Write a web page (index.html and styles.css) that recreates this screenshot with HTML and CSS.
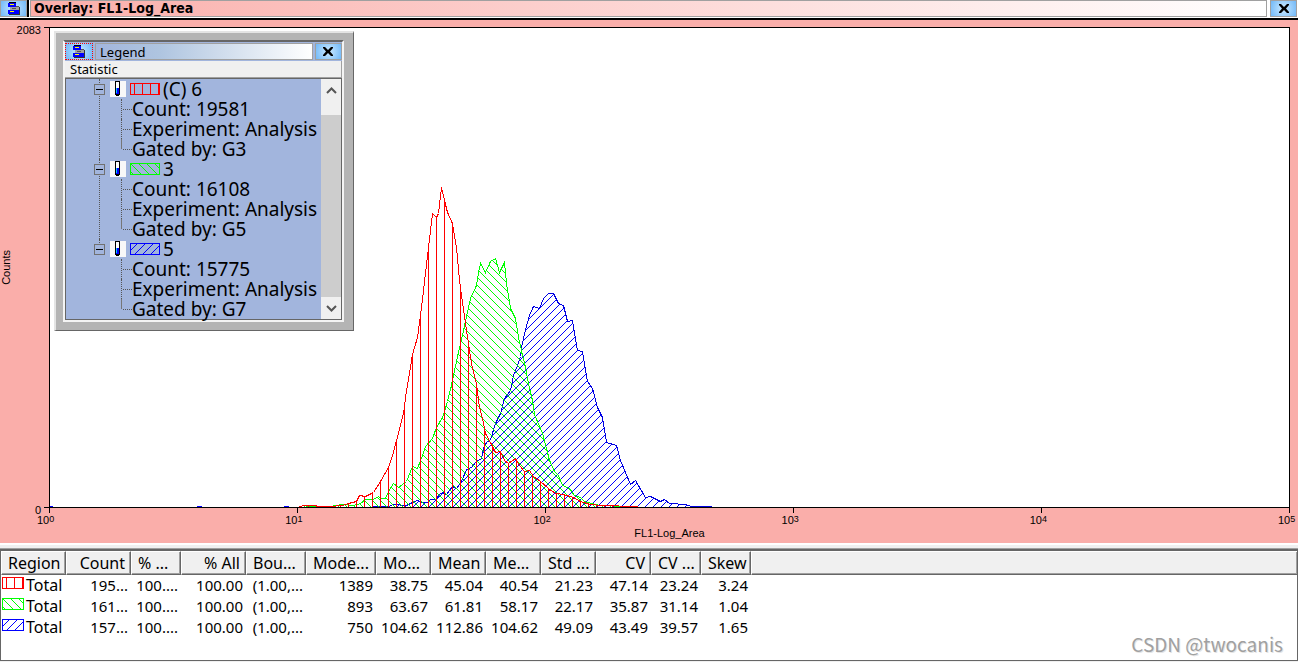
FILE: index.html
```html
<!DOCTYPE html>
<html lang="en">
<head>
<meta charset="utf-8">
<title>Overlay: FL1-Log_Area</title>
<link rel="stylesheet" href="styles.css">
</head>
<body>
<svg class="defs" width="0" height="0" aria-hidden="true">
  <defs>
    <pattern id="hatch-red" width="8" height="8" patternUnits="userSpaceOnUse" patternTransform="translate(-.5 -.5)"><path d="M4 0h1v8h-1z" fill="#f00"/></pattern>
    <pattern id="hatch-green" width="8" height="8" patternUnits="userSpaceOnUse" patternTransform="translate(-.5 -.5)"><path d="M0 0h1v1h-1zM1 1h1v1h-1zM2 2h1v1h-1zM3 3h1v1h-1zM4 4h1v1h-1zM5 5h1v1h-1zM6 6h1v1h-1zM7 7h1v1h-1z" fill="#0f0"/></pattern>
    <pattern id="hatch-blue" width="8" height="8" patternUnits="userSpaceOnUse" patternTransform="translate(-.5 -.5)"><path d="M7 0h1v1h-1zM6 1h1v1h-1zM5 2h1v1h-1zM4 3h1v1h-1zM3 4h1v1h-1zM2 5h1v1h-1zM1 6h1v1h-1zM0 7h1v1h-1z" fill="#00f"/></pattern>
    <symbol id="icon-menu" viewBox="0 0 12 13">
      <path d="M1 0h7v1H1z" fill="#000"/><path d="M0 1h8v4H0z" fill="#00f"/><path d="M2 2h4v1H2z" fill="#ff0"/>
      <path d="M2 5h9v3H2z" fill="#a0a0a0"/><path d="M8 4h3v1H8zM4 6h4v1H4z" fill="#555"/>
      <path d="M0 8h11v4H0z" fill="#00f"/><path d="M2 9h4v1H2z" fill="#ff0"/><path d="M11 5h1v8H1v-1h10z" fill="#333"/>
    </symbol>
    <symbol id="icon-close" viewBox="0 0 12 11">
      <path d="M1 1h2l3 3 3-3h2v1L8 5.500l3 3.500v1H9L6 7l-3 3H1V9l3-3.500L1 2z" fill="#000"/>
    </symbol>
    <symbol id="icon-tube" viewBox="0 0 16 16">
      <path d="M0 0h16v16H0z" fill="#f8f8f8"/><path d="M5 0h5v14H9v1H6v-1H5z" fill="#000"/>
      <path d="M6 1h3v6H6z" fill="#fff"/><path d="M6 7h3v6H6z" fill="#00f"/><path d="M6 7h1v5H6z" fill="#00c8ff"/>
    </symbol>
  </defs>
</svg>

<header class="titlebar">
  <button class="chip" aria-label="Menu"><svg width="12" height="13"><use href="#icon-menu"/></svg></button>
  <h1 class="title">Overlay: FL1-Log_Area</h1>
  <button class="chip" aria-label="Close"><svg width="12" height="11"><use href="#icon-close"/></svg></button>
</header>

<main class="chart">
  <div class="y-axis">
    <span class="y-max">2083</span>
    <span class="y-title">Counts</span>
    <span class="y-min">0</span>
  </div>
  <svg class="plot" viewBox="49 27 1241 481" preserveAspectRatio="none" shape-rendering="crispEdges" role="img" aria-label="Histogram overlay">
    <rect x="49" y="27" width="1241" height="481" fill="#fff"/>
    <path d="M49 506.500h4M197 506.500h5M284 506.500h5" stroke="#00f"/>
    <g transform="translate(.5 .5)">
    <g stroke="#0000e0" fill="url(#hatch-blue)"><path d="M372 507L373 506 388 506 393 504 406 505 412 502 417 500 422 502 427 502 430 499 435 499 439 494 442 492 446 494 452 486 456 488 461 481 466 469 471 467 476 461 481 458 483 448 486 442 490 439 495 423 500 413 504 398 510 390 513 375 517 365 520 356 521 347 525 329 529 315 533 306 539 308 543 298 548 293 553 293 558 303 563 305 567 321 572 320 577 350 582 351 587 381 592 388 597 407 602 417 606 442 616 445 620 460 630 484 635 480 645 497 650 496 660 501 664 499 669 503 685 504 691 506 711 506"/></g>
    <g stroke="#0f0" fill="url(#hatch-green)"><path d="M303 507L305 505 308 506 330 506 341 504 353 505 360 503 365 499 373 499 378 496 381 498 385 498 388 491 393 483 398 487 406 481 412 466 417 468 422 455 425 446 432 438 436 427 442 417 447 401 452 380 457 356 463 330 466 316 470 298 476 285 478 272 480 263 485 272 490 261 495 258 499 272 504 262 506 283 510 308 515 318 518 337 521 350 525 367 528 383 532 400 534 414 542 433 546 448 549 460 554 471 558 475 562 485 569 488 574 495 580 497 584 501 591 503 600 505 626 506 626 507"/></g>
    <g stroke="#f00" fill="url(#hatch-red)"><path d="M297 507L300 506 303 505 330 506 342 505 348 503 356 501 359 495 365 496 373 492 380 481 388 467 392 455 396 440 400 425 403 413 406 390 409 373 412 354 417 337 421 307 428 247 432 213 436 217 438 213 441 187 444 200 447 212 452 223 456 247 459 280 462 302 465 323 468 343 471 363 476 383 479 407 482 418 485 433 490 442 495 452 500 451 504 460 508 463 515 458 519 465 524 471 529 470 533 476 540 481 548 488 555 493 563 494 573 497 580 501 590 504 600 505 637 506 637 507"/></g>
    </g>
    <path d="M49.500 27.500h1240v480h-1240z" fill="none" stroke="#000"/>
  </svg>
  <div class="x-axis">
    <div class="x-ticks"><i></i><i></i><i></i><i></i><i></i><i></i></div>
    <div class="x-labels"><span>10<sup>0</sup></span><span>10<sup>1</sup></span><span>10<sup>2</sup></span><span>10<sup>3</sup></span><span>10<sup>4</sup></span><span>10<sup>5</sup></span></div>
    <div class="x-title">FL1-Log_Area</div>
  </div>

  <section class="legend" aria-label="Legend">
    <div class="legend-inner">
      <div class="legend-bar">
        <button class="chip chip-focus" aria-label="Legend menu"><svg width="12" height="13"><use href="#icon-menu"/></svg></button>
        <h2 class="legend-title">Legend</h2>
        <button class="chip chip-close" aria-label="Close legend"><svg width="12" height="11"><use href="#icon-close"/></svg></button>
      </div>
      <div class="statistic">Statistic</div>
      <div class="tree-view">
        <ul class="tree">
          <li class="group">
            <div class="node"><button class="toggle" aria-label="Collapse"></button><svg class="tube" width="16" height="16"><use href="#icon-tube"/></svg><svg class="swatch" width="30" height="12" shape-rendering="crispEdges"><rect transform="translate(.5 .5)" width="29" height="11" stroke="#f00" fill="url(#hatch-red)"/></svg><span>(C) 6</span></div>
            <ul class="details"><li>Count: 19581</li><li>Experiment: Analysis</li><li>Gated by: G3</li></ul>
          </li>
          <li class="group">
            <div class="node"><button class="toggle" aria-label="Collapse"></button><svg class="tube" width="16" height="16"><use href="#icon-tube"/></svg><svg class="swatch" width="30" height="12" shape-rendering="crispEdges"><rect transform="translate(.5 .5)" width="29" height="11" stroke="#0f0" fill="url(#hatch-green)"/></svg><span>3</span></div>
            <ul class="details"><li>Count: 16108</li><li>Experiment: Analysis</li><li>Gated by: G5</li></ul>
          </li>
          <li class="group">
            <div class="node"><button class="toggle" aria-label="Collapse"></button><svg class="tube" width="16" height="16"><use href="#icon-tube"/></svg><svg class="swatch" width="30" height="12" shape-rendering="crispEdges"><rect transform="translate(.5 .5)" width="29" height="11" stroke="#00f" fill="url(#hatch-blue)"/></svg><span>5</span></div>
            <ul class="details"><li>Count: 15775</li><li>Experiment: Analysis</li><li>Gated by: G7</li></ul>
          </li>
        </ul>
        <div class="scrollbar">
          <button class="scroll-up" aria-label="Scroll up"><svg width="11" height="7"><path d="M1 6l4.500-4.500L10 6" fill="none" stroke="#555" stroke-width="2"/></svg></button>
          <div class="thumb"></div>
          <button class="scroll-down" aria-label="Scroll down"><svg width="11" height="7"><path d="M1 1l4.500 4.500L10 1" fill="none" stroke="#555" stroke-width="2"/></svg></button>
        </div>
      </div>
    </div>
  </section>
</main>

<section class="stats">
  <div class="table-frame">
  <table>
    <colgroup><col class="w65"><col class="w65"><col class="w50"><col class="w65"><col class="w60"><col class="w70"><col class="w55"><col class="w55"><col class="w55"><col class="w55"><col class="w55"><col class="w50"><col class="w50"><col></colgroup>
    <thead>
      <tr><th class="left">Region</th><th>Count</th><th class="left">% ...</th><th>% All</th><th class="left">Bou...</th><th class="left">Mode...</th><th class="left">Mo...</th><th>Mean</th><th class="left">Me...</th><th class="left">Std ...</th><th>CV</th><th class="left">CV ...</th><th>Skew</th><th class="rest"></th></tr>
    </thead>
    <tbody>
      <tr><td class="region"><svg width="22" height="12" shape-rendering="crispEdges"><rect transform="translate(.5 .5)" width="21" height="11" stroke="#f00" fill="url(#hatch-red)"/></svg>Total</td><td>195...</td><td>100....</td><td>100.00</td><td>(1.00,...</td><td>1389</td><td>38.75</td><td>45.04</td><td>40.54</td><td>21.23</td><td>47.14</td><td>23.24</td><td>3.24</td><td></td></tr>
      <tr><td class="region"><svg width="22" height="12" shape-rendering="crispEdges"><rect transform="translate(.5 .5)" width="21" height="11" stroke="#0f0" fill="url(#hatch-green)"/></svg>Total</td><td>161...</td><td>100....</td><td>100.00</td><td>(1.00,...</td><td>893</td><td>63.67</td><td>61.81</td><td>58.17</td><td>22.17</td><td>35.87</td><td>31.14</td><td>1.04</td><td></td></tr>
      <tr><td class="region"><svg width="22" height="12" shape-rendering="crispEdges"><rect transform="translate(.5 .5)" width="21" height="11" stroke="#00f" fill="url(#hatch-blue)"/></svg>Total</td><td>157...</td><td>100....</td><td>100.00</td><td>(1.00,...</td><td>750</td><td>104.62</td><td>112.86</td><td>104.62</td><td>49.09</td><td>43.49</td><td>39.57</td><td>1.65</td><td></td></tr>
    </tbody>
  </table>
  </div>
  <span class="watermark">CSDN @twocanis</span>
</section>
</body>
</html>
```

FILE: styles.css
```css
* { box-sizing: border-box; }
body {
  margin: 0;
  min-height: 100vh;
  display: flex;
  flex-direction: column;
  background: #fff;
  color: #000;
  font-family: "Noto Sans", sans-serif;
}
button { margin: 0; padding: 0; border: 0; }
ul { margin: 0; padding: 0; list-style: none; }
svg { display: block; flex: none; }
.defs { position: absolute; }

.titlebar {
  display: flex;
  gap: 3px;
  height: 20px;
  padding-right: 1px;
  border-bottom: 2px solid #000;
  background: #fff;
}
.chip {
  flex: none;
  display: flex;
  align-items: center;
  justify-content: center;
  width: 27px;
  border: 1px solid #a0a0a0;
  background: radial-gradient(circle, #cdeaff, #70b8f8);
}
.titlebar .chip { height: 17px; }
.titlebar .chip:first-child { box-shadow: 2px 0 #000; }
.title {
  flex: 1;
  height: 17px;
  margin: 0;
  padding-left: 3px;
  border: 1px solid #a0a0a0;
  background: linear-gradient(90deg, #faaeaa, #fff);
  font: bold 14px/15px "DejaVu Sans Condensed", "Noto Sans", sans-serif;
}

.chart {
  position: relative;
  flex: 1;
  display: grid;
  grid-template: 7px minmax(320px, 1fr) 35px / 49px 1fr 8px;
  background: #faaeaa;
  font: 11px/13px "Liberation Sans", sans-serif;
}
.y-axis {
  grid-area: 2 / 1;
  display: flex;
  flex-direction: column;
  justify-content: space-between;
  align-items: flex-end;
  margin-bottom: -9px;
  padding-right: 8px;
  background:
    linear-gradient(#000, #000) right 0 top 0 / 5px 1px no-repeat,
    linear-gradient(#000, #000) right 0 bottom 9px / 5px 1px no-repeat;
}
.y-max { margin-top: -3px; }
.y-title {
  align-self: flex-start;
  margin-bottom: 6px;
  writing-mode: vertical-rl;
  transform: rotate(180deg);
}
.plot { grid-area: 2 / 2; width: 100%; height: 100%; min-height: 0; }
.x-axis { grid-area: 3 / 2; }
.x-ticks { display: flex; justify-content: space-between; height: 5px; }
.x-ticks i { width: 1px; background: #000; }
.x-labels { display: flex; justify-content: space-between; margin: 0 -4px 0 -12px; }
.x-labels span { width: 16px; height: 14px; white-space: nowrap; line-height: 14px; }
.x-labels sup { font-size: 9px; line-height: 0; vertical-align: 2px; }
.x-title { text-align: center; }

.legend {
  position: absolute;
  left: 54px;
  top: 11px;
  width: 300px;
  padding: 7px 9px 8px 7px;
  border: 2px solid #e4e4e4;
  border-right: 1px solid #666;
  border-bottom: 1px solid #666;
  background: #b4b4b4;
  font: 13px/16px "Noto Sans", sans-serif;
}
.legend-inner { border: 2px solid #f4f4f4; border-top-color: #666; background: #a2b5dd; }
.legend-bar { display: flex; gap: 2px; height: 19px; padding: 1px 0; }
.chip-focus { border: 1px dotted #f00; width: 28px; }
.chip-close { padding-right: 2px; }
.legend-title {
  flex: 1;
  margin: 0;
  padding-left: 4px;
  border: 1px solid #a0a0a0;
  background: linear-gradient(90deg, #a2b5dd, #afc5e0 30%, #fff);
  font-size: 13px;
  font-weight: 400;
  line-height: 16px;
}
.statistic {
  height: 17px;
  padding-left: 5px;
  border-right: 1px solid #a0a0a0;
  border-bottom: 1px solid #a0a0a0;
  background: #f0f0f0;
}
.tree-view { display: flex; border: 1px solid #666; }
.tree { flex: 1; min-width: 0; font-size: 19px; }
.group { position: relative; }
.group::before {
  content: "";
  position: absolute;
  left: 33px;
  top: 0;
  height: 100%;
  border-left: 1px dotted #555;
}
.group:last-child::before { height: 10px; }
.node { display: flex; align-items: center; height: 20px; padding-left: 28px; line-height: 20px; }
.toggle {
  position: relative;
  width: 11px;
  height: 11px;
  border: 1px solid #707070;
  background: linear-gradient(#000, #000) center / 7px 1px no-repeat #a2b5dd;
}
.tube { margin-left: 5px; }
.swatch { margin: 0 3px 0 4px; }
.details { margin-left: 55px; }
.details li {
  height: 20px;
  padding-left: 10px;
  border-left: 1px dotted #555;
  background: repeating-linear-gradient(90deg, transparent 0 1px, #555 1px 2px) left 0 top 10px / 10px 1px no-repeat;
  line-height: 20px;
  white-space: nowrap;
}
.details li:last-child { border-image: linear-gradient(#777 50%, transparent 50%) 1; }
.scrollbar { display: flex; flex-direction: column; width: 20px; background: #f0f0f0; }
.scrollbar button { display: grid; place-items: center; background: #f0f0f0; }
.scrollbar .scroll-up { height: 36px; padding-bottom: 14px; }
.scroll-down { height: 22px; }
.thumb { flex: 1; background: #cdcdcd; }

.stats {
  position: relative;
  display: flex;
  height: 119px;
  padding: 4px 0 1px;
  border-top: 2px solid #fff;
  background: #f0f0f0;
}
.table-frame {
  flex: 1;
  border: 1px solid #666;
  border-top-width: 2px;
  box-shadow: 0 -1px #a0a0a0;
  background: #fff;
}
.stats table {
  width: 100%;
  table-layout: fixed;
  border-collapse: separate;
  border-spacing: 0;
  font-size: 15px;
  line-height: 21px;
}
.stats th {
  height: 24px;
  padding: 0 5px 0 6px;
  border: 1px solid #fff;
  border-right: 1px solid #666;
  border-bottom: 1px solid #666;
  box-shadow: inset -1px -1px #a0a0a0;
  background: #f0f0f0;
  font-size: 16px;
  font-weight: 400;
  text-align: right;
  white-space: nowrap;
}
.stats .left { padding-right: 0; text-align: left; }
.stats .rest { border-right: 0; }
.stats td { height: 21px; padding: 0 3px 0 0; text-align: right; white-space: nowrap; }
.stats .region { display: flex; padding: 0; font-size: 16px; }
.region svg { margin: 2px 2px 0 1px; }
.watermark {
  position: absolute;
  right: 15px;
  bottom: 6px;
  color: #a0a0a0;
  font: 19px/24px "Noto Sans CJK SC", "Noto Sans", sans-serif;
  text-shadow: 1px 1px #e4e4e4;
}
.w50 { width: 50px; }
.w55 { width: 55px; }
.w60 { width: 60px; }
.w65 { width: 65px; }
.w70 { width: 70px; }
```
